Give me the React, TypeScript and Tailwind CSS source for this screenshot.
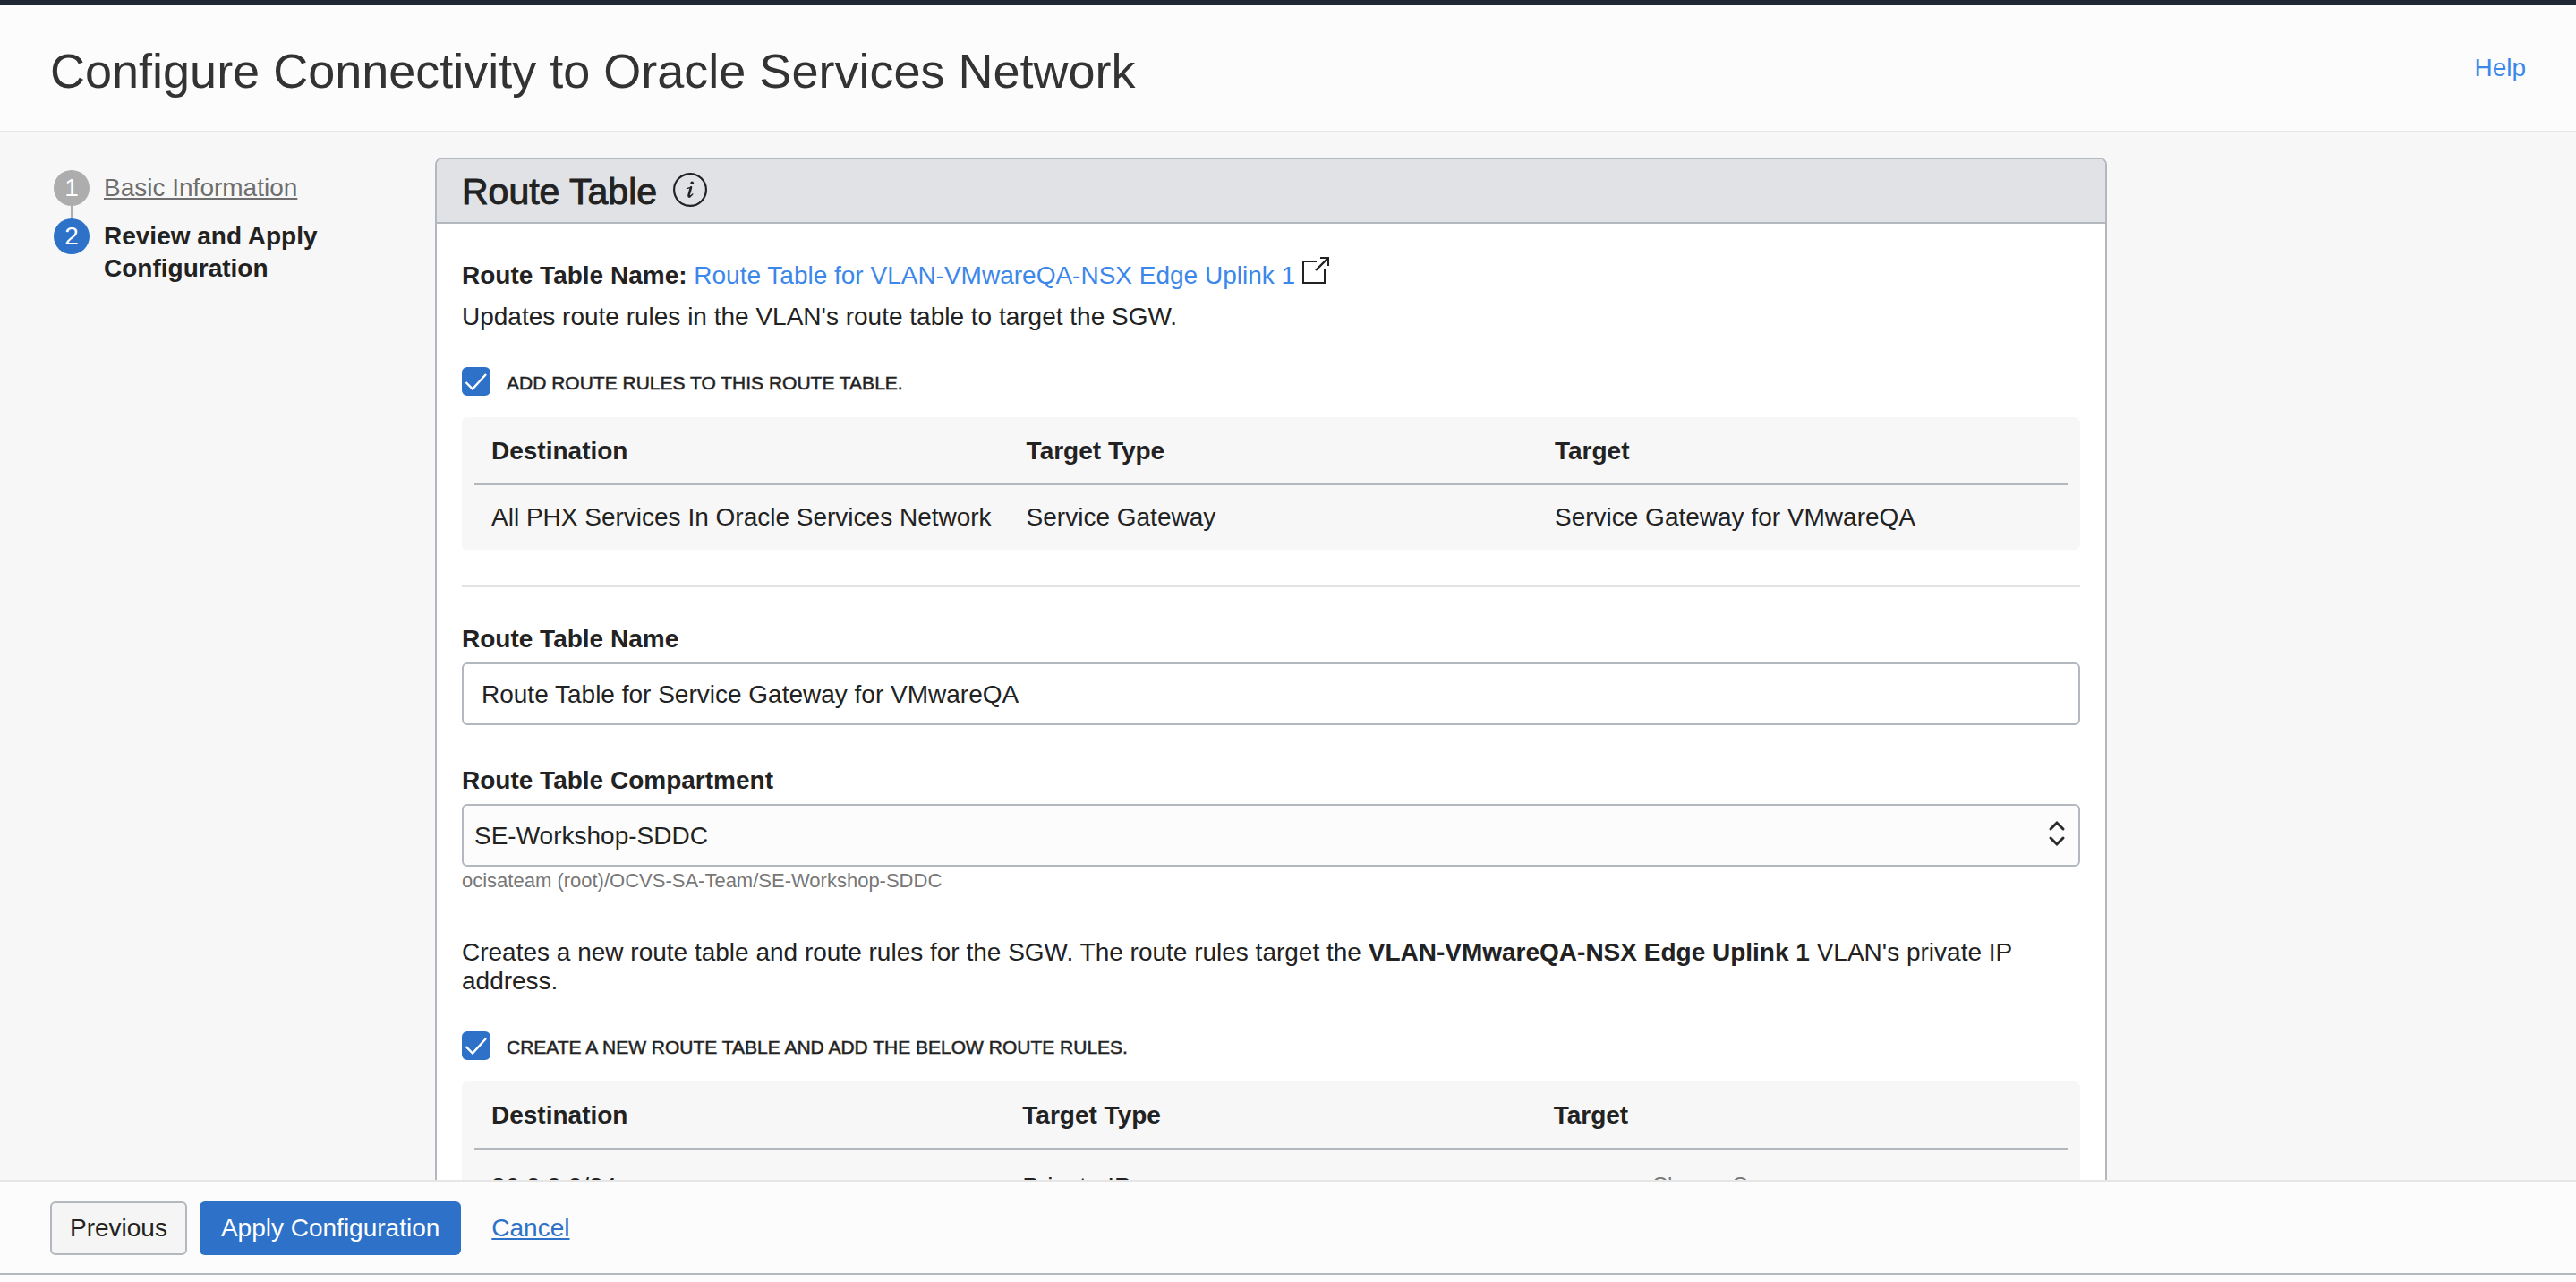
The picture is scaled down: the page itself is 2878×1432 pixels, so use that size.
import React from "react";

const bodyText = "text-[28px] leading-8";
const border = "border-[#b3b8bf]";

function InfoIcon() {
  return (
    <svg className="mb-0.5 size-[38px]" viewBox="0 0 38 38" fill="none" stroke="#222" aria-label="Info">
      <circle cx="19" cy="19" r="17.9" strokeWidth="2.2" />
      <path d="M15.5 17.6l4.2-1.3" strokeWidth="1.4" strokeLinecap="round" />
      <path d="M20 16.3L17.6 24.8c-.5 1.9.4 2 1.2 1.4" strokeWidth="2.6" strokeLinecap="round" strokeLinejoin="round" />
      <path d="M18.8 26.6c1.2-.5 2.2-1.5 3-2.7" strokeWidth="1.4" strokeLinecap="round" />
      <circle cx="21.2" cy="11.3" r="1.8" fill="#222" stroke="none" />
    </svg>
  );
}

function ExternalIcon() {
  return (
    <svg className="ml-2 inline size-[30px] align-baseline" viewBox="0 0 30 30" fill="none" stroke="#222" strokeWidth="2" aria-hidden="true">
      <path d="M16 5H1v24h24V14" />
      <path d="M20 1h9v9" />
      <path d="M29 1 15 15" strokeWidth="2.4" />
    </svg>
  );
}

function Check({ id, children }: { id: string; children: React.ReactNode }) {
  return (
    <div className="flex h-8 items-center gap-[18px]">
      <span className="relative size-8 shrink-0">
        <input id={id} type="checkbox" defaultChecked className="peer block size-8 appearance-none rounded-md border-2 border-[#2d71c8] bg-white checked:bg-[#2d71c8]" />
        <svg className="pointer-events-none absolute inset-0 hidden size-8 peer-checked:block" viewBox="0 0 32 32" fill="none" stroke="#fff" strokeWidth="2.4" aria-hidden="true">
          <path d="M4.5 17l7.5 7.5L27 8" />
        </svg>
      </span>
      <label htmlFor={id} className="pt-1 text-[21px] leading-7 uppercase [-webkit-text-stroke:1px_#22222288]">{children}</label>
    </div>
  );
}

function RulesTable({ row, cellPad }: { row: React.ReactNode[]; cellPad: string }) {
  return (
    <div className="rounded-md bg-[#f7f7f7] px-3.5">
      <table className={`w-full text-left ${bodyText}`}>
        <thead>
          <tr className={`border-b-2 ${border}`}>
            {["Destination", "Target Type", "Target"].map((name) => (
              <th key={name} className="w-1/3 pt-[22px] pr-5 pb-5 pl-[19px] font-bold">{name}</th>
            ))}
          </tr>
        </thead>
        <tbody>
          <tr>
            {row.map((cell, i) => (
              <td key={i} className={`pr-5 pl-[19px] align-top whitespace-nowrap ${cellPad}`}>{cell}</td>
            ))}
          </tr>
        </tbody>
      </table>
    </div>
  );
}

export default function App() {
  return (
    <div className={`flex h-screen flex-col bg-[#fcfcfc] font-['Liberation_Sans',Arial,sans-serif] text-[#222] ${bodyText}`}>
      <div className="h-1.5 shrink-0 bg-[#212734]" />
      <header className="flex h-[142px] shrink-0 items-center justify-between border-b-2 border-[#e6e6e6] px-14">
        <h1 className="pt-1.5 text-[54px] leading-[60px] text-[#333]">Configure Connectivity to Oracle Services Network</h1>
        <a href="#help" className="text-[#3c87ea]">Help</a>
      </header>

      <div className="flex min-h-0 flex-1 overflow-hidden bg-[#f7f7f7]">
        <nav className="w-[486px] shrink-0 pt-[42px] pl-[60px]" aria-label="Steps">
          <ol>
            <li className="flex gap-4">
              <div className="flex flex-col items-center">
                <span className="flex size-10 items-center justify-center rounded-full bg-[#adadad] text-white">1</span>
                <span className="h-3.5 w-0.5 bg-[#adadad]" />
              </div>
              <a href="#basic" className="h-10 leading-10 text-[#6e6e6e] underline">Basic Information</a>
            </li>
            <li className="flex gap-4" aria-current="step">
              <span className="flex size-10 shrink-0 items-center justify-center rounded-full bg-[#2d71c8] text-white">2</span>
              <span className="w-64 pt-0.5 leading-9 font-bold">Review and Apply Configuration</span>
            </li>
          </ol>
        </nav>

        <main className="min-w-0 flex-1 pt-7 pr-[524px]">
          <section className={`rounded-lg border-2 bg-white ${border}`}>
            <div className={`flex h-[72px] items-center gap-[18px] rounded-t-md border-b-2 bg-[#e1e2e5] px-7 ${border}`}>
              <h2 className="pt-0.5 text-[41px] leading-12 [-webkit-text-stroke:1px]">Route Table</h2>
              <InfoIcon />
            </div>
            <div className="px-7 pt-[37px]">
              <p>
                <strong>Route Table Name:</strong>{" "}
                <a href="#route-table" className="text-[#3c87ea]">
                  Route Table for VLAN-VMwareQA-NSX Edge Uplink 1<ExternalIcon />
                </a>
              </p>
              <p className="mt-3.5">Updates route rules in the VLAN's route table to target the SGW.</p>
              <div className="mt-10 mb-6">
                <Check id="add-rules">Add route rules to this route table.</Check>
              </div>
              <RulesTable cellPad="py-5" row={["All PHX Services In Oracle Services Network", "Service Gateway", "Service Gateway for VMwareQA"]} />
              <hr className="mt-10 mb-[42px] border-t-2 border-[#e3e3e3]" />
              <label htmlFor="rt-name" className="mb-2.5 block font-bold">Route Table Name</label>
              <input id="rt-name" defaultValue="Route Table for Service Gateway for VMwareQA" className={`block h-[70px] w-full rounded-md border-2 bg-white px-5 pt-0.5 ${border}`} />
              <label htmlFor="rt-comp" className="mt-[46px] mb-2.5 block font-bold">Route Table Compartment</label>
              <div className="relative">
                <select id="rt-comp" className={`block h-[70px] w-full appearance-none rounded-md border-2 bg-[#fcfcfc] px-3 pt-0.5 ${border}`}>
                  <option>SE-Workshop-SDDC</option>
                </select>
                <svg className="pointer-events-none absolute top-[18px] right-4 h-[30px] w-5" viewBox="0 0 20 30" fill="none" stroke="#2b2b2b" strokeWidth="3" strokeLinecap="round" aria-hidden="true">
                  <path d="M3 10l7-7 7 7M3 20l7 7 7-7" />
                </svg>
              </div>
              <p className="mt-0.5 text-[22px] leading-7 text-[#777]">ocisateam (root)/OCVS-SA-Team/SE-Workshop-SDDC</p>
              <p className="mt-[50px]">
                Creates a new route table and route rules for the SGW. The route rules target the <strong>VLAN-VMwareQA-NSX Edge Uplink 1</strong> VLAN's private IP address.
              </p>
              <div className="mt-10 mb-6">
                <Check id="new-table">Create a new route table and add the below route rules.</Check>
              </div>
              <RulesTable cellPad="py-[26px]" row={["86.0.0.0/24", "Private IP", <span className="block pl-[110px] text-[24px] leading-7 text-[#777]">Choose One</span>]} />
            </div>
          </section>
        </main>
      </div>

      <footer className="mb-2 flex h-[106px] shrink-0 items-center gap-3.5 border-t-2 border-b-2 border-t-[#e6e6e6] border-b-[#b3b8bf] px-14 pt-0.5">
        <button className={`h-[60px] rounded-md border-2 bg-[#f5f5f5] px-5 ${border}`}>Previous</button>
        <button className="h-[60px] rounded-md bg-[#2d71c8] px-6 text-white">Apply Configuration</button>
        <a href="#cancel" className="ml-5 text-[#2d71c8] underline">Cancel</a>
      </footer>
    </div>
  );
}
